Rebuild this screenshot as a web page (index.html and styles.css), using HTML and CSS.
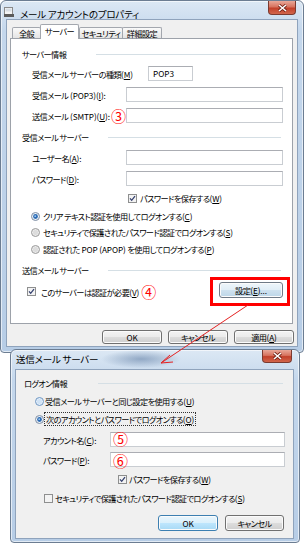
FILE: index.html
```html
<!DOCTYPE html>
<html lang="ja">
<head>
<meta charset="UTF-8">
<meta name="viewport" content="width=device-width, initial-scale=1.0">
<title>メール アカウントのプロパティ</title>
<link rel="stylesheet" href="styles.css">
</head>
<body>
<div class="page">

  <div class="window main">
    <div class="titlebar">
      <svg class="app-icon" width="10" height="10" viewBox="0 0 10 10">
        <rect x="0.5" y="0.5" width="8" height="7" fill="#f4f4f4" stroke="#8a8a8a"/>
        <rect x="1.5" y="1.5" width="6" height="3" fill="#d8dde4"/>
        <rect x="0" y="7" width="10" height="3" fill="#5b5b5b"/>
      </svg>
      <span class="title">メール アカウントのプロパティ</span>
      <span class="close">
        <svg width="9" height="8" viewBox="0 0 9 8"><path d="M1 1 L8 7 M8 1 L1 7" stroke="#6b1d12" stroke-width="3"/><path d="M1 1 L8 7 M8 1 L1 7" stroke="#fff" stroke-width="1.6"/></svg>
      </span>
    </div>
    <div class="client">
      <div class="tabs">
        <div class="tab">全般</div>
        <div class="tab active">サーバー</div>
        <div class="tab">セキュリティ</div>
        <div class="tab">詳細設定</div>
      </div>
      <div class="panel">
        <div class="group first"><span class="group-name short">サーバー情報</span><span class="rule"></span></div>

        <div class="field"><span class="label wide">受信メール サーバーの種類<span class="en">(<u>M</u>)</span></span><span class="box small">POP3</span></div>
        <div class="field"><span class="label">受信メール<span class="en"> (POP3)(<u>I</u>):</span></span><span class="box"></span></div>
        <div class="field"><span class="label">送信メール<span class="en"> (SMTP)(<u>U</u>):</span></span><span class="box"></span><span class="mark mark-smtp">③</span></div>

        <div class="group"><span class="group-name">受信メール サーバー</span><span class="rule"></span></div>

        <div class="field gap7"><span class="label">ユーザー名<span class="en">(<u>A</u>):</span></span><span class="box"></span></div>
        <div class="field"><span class="label">パスワード<span class="en">(<u>D</u>):</span></span><span class="box"></span></div>

        <div class="option save-pass">
          <svg class="cb" width="9" height="9" viewBox="0 0 9 9"><rect x="0.5" y="0.5" width="8" height="8" fill="#f3f3f3" stroke="#8e8f8f"/><path d="M2 4.3 L3.7 6.3 L7 2.2" fill="none" stroke="#34406e" stroke-width="1.3"/></svg>
          <span>パスワードを保存する<span class="en">(<u>W</u>)</span></span>
        </div>

        <div class="option radio r1">
          <svg class="rb" width="9" height="9" viewBox="0 0 9 9"><circle cx="4.5" cy="4.5" r="4" fill="#eef3f8" stroke="#7f8ea4"/><circle cx="4.5" cy="4.5" r="2.4" fill="#2c6bb4"/><circle cx="4.2" cy="4.2" r="0.9" fill="#9cc6ef"/></svg>
          <span>クリア テキスト認証を使用してログオンする<span class="en">(<u>C</u>)</span></span>
        </div>
        <div class="option radio r2">
          <svg class="rb" width="9" height="9" viewBox="0 0 9 9"><circle cx="4.5" cy="4.5" r="4" fill="#ececec" stroke="#9a9a9a"/><circle cx="4.5" cy="4.5" r="2.5" fill="#dcdcdc"/></svg>
          <span>セキュリティで保護されたパスワード認証でログオンする<span class="en">(<u>S</u>)</span></span>
        </div>
        <div class="option radio r3">
          <svg class="rb" width="9" height="9" viewBox="0 0 9 9"><circle cx="4.5" cy="4.5" r="4" fill="#ececec" stroke="#9a9a9a"/><circle cx="4.5" cy="4.5" r="2.5" fill="#dcdcdc"/></svg>
          <span>認証された<span class="en"> POP (APOP) </span>を使用してログオンする<span class="en">(<u>P</u>)</span></span>
        </div>

        <div class="group last"><span class="group-name">送信メール サーバー</span><span class="rule"></span></div>

        <div class="auth-row">
          <div class="option auth">
            <svg class="cb" width="9" height="9" viewBox="0 0 9 9"><rect x="0.5" y="0.5" width="8" height="8" fill="#f3f3f3" stroke="#8e8f8f"/><path d="M2 4.3 L3.7 6.3 L7 2.2" fill="none" stroke="#34406e" stroke-width="1.3"/></svg>
            <span>このサーバーは認証が必要<span class="en">(<u>V</u>)</span></span><span class="mark">④</span>
          </div>
          <div class="highlight">
            <span class="btn settings">設定<span class="en">(<u>E</u>)...</span></span>
          </div>
        </div>
      </div>
      <div class="buttons">
        <span class="btn en">OK</span>
        <span class="btn">キャンセル</span>
        <span class="btn">適用<span class="en">(<u>A</u>)</span></span>
      </div>
    </div>
  </div>

  <div class="window sub">
    <div class="titlebar">
      <span class="title">送信メール サーバー</span>
      <span class="close">
        <svg width="9" height="8" viewBox="0 0 9 8"><path d="M1 1 L8 7 M8 1 L1 7" stroke="#6b1d12" stroke-width="3"/><path d="M1 1 L8 7 M8 1 L1 7" stroke="#fff" stroke-width="1.6"/></svg>
      </span>
    </div>
    <div class="client">
      <div class="group"><span class="group-name short">ログオン情報</span><span class="rule"></span></div>

      <div class="option radio s1">
        <svg class="rb" width="9" height="9" viewBox="0 0 9 9"><circle cx="4.5" cy="4.5" r="4" fill="#e3eef9" stroke="#6f96c2"/><circle cx="4.5" cy="4.5" r="2.5" fill="#cfe2f5"/></svg>
        <span>受信メール サーバーと同じ設定を使用する<span class="en">(<u>U</u>)</span></span>
      </div>
      <div class="option radio s2">
        <svg class="rb" width="9" height="9" viewBox="0 0 9 9"><circle cx="4.5" cy="4.5" r="4" fill="#eef3f8" stroke="#7f8ea4"/><circle cx="4.5" cy="4.5" r="2.4" fill="#2c6bb4"/><circle cx="4.2" cy="4.2" r="0.9" fill="#9cc6ef"/></svg>
        <span class="focus">次のアカウントとパスワードでログオンする<span class="en">(<u>O</u>)</span></span>
      </div>

      <div class="field account"><span class="label">アカウント名<span class="en">(<u>C</u>):</span></span><span class="box"><span class="mark">⑤</span></span></div>
      <div class="field account pass"><span class="label">パスワード<span class="en">(<u>P</u>):</span></span><span class="box"><span class="mark">⑥</span></span></div>

      <div class="option save-pass2">
        <svg class="cb" width="9" height="9" viewBox="0 0 9 9"><rect x="0.5" y="0.5" width="8" height="8" fill="#f3f3f3" stroke="#8e8f8f"/><path d="M2 4.3 L3.7 6.3 L7 2.2" fill="none" stroke="#34406e" stroke-width="1.3"/></svg>
        <span>パスワードを保存する<span class="en">(<u>W</u>)</span></span>
      </div>
      <div class="option spa">
        <svg class="cb" width="9" height="9" viewBox="0 0 9 9"><rect x="0.5" y="0.5" width="8" height="8" fill="#f3f3f3" stroke="#8e8f8f"/></svg>
        <span>セキュリティで保護されたパスワード認証でログオンする<span class="en">(<u>S</u>)</span></span>
      </div>

      <div class="buttons sub-buttons">
        <span class="btn default en">OK</span>
        <span class="btn">キャンセル</span>
      </div>
    </div>
  </div>

  <svg class="arrow" width="305" height="546" viewBox="0 0 305 546">
    <path d="M248 305 L161 363" stroke="#e52222" stroke-width="1" fill="none"/>
    <path d="M170 355 L161 363 L173 362" stroke="#e52222" stroke-width="1" fill="none"/>
  </svg>
</div>
</body>
</html>
```

FILE: styles.css
```css
* {
    box-sizing: border-box;
}
body {
    margin: 0;
    background: #fff;
    font-family: "Noto Sans CJK JP", "Noto Sans", sans-serif;
    font-size: 8.2px;
    line-height: 12px;
    letter-spacing: -0.6px;
    color: #000;
    font-feature-settings: "palt" 1;
}
.en {
    letter-spacing: -0.1px;
}
u {
    text-underline-offset: 1px;
}
.page {
    position: relative;
    width: 305px;
    height: 546px;
    overflow: hidden;
}

/* window frame */
.window {
    display: flex;
    flex-direction: column;
    border: 1px solid #6c7d92;
    border-radius: 6px 6px 4px 4px;
    background: linear-gradient(180deg, #dce8f4 0, #c4d7ec 30px, #b7cde6 100%);
    box-shadow: inset 0 0 0 1px rgba(255, 255, 255, 0.6);
}
.main {
    width: 304px;
    height: 353px;
    padding: 0 5px 5px 5px;
}
.sub {
    position: relative;
    width: 290px;
    height: 194px;
    margin: -4px 0 0 10px;
    padding: 0 5px 3px 4px;
    background:
        radial-gradient(ellipse 40px 9px at 130px 9px, rgba(90, 120, 160, 0.55), rgba(90, 120, 160, 0) 100%),
        linear-gradient(180deg, #dce8f4 0, #c4d7ec 30px, #b7cde6 100%);
}
.titlebar {
    display: flex;
    align-items: flex-start;
    height: 18px;
    margin: 0 -5px;
    padding-left: 3px;
}
.sub .titlebar {
    height: 19px;
    margin: 0 -5px 0 -4px;
    padding-left: 5px;
}
.app-icon {
    margin-top: 6px;
    margin-right: 6px;
}
.title {
    margin-top: 7px;
    font-size: 9.5px;
    letter-spacing: -0.2px;
}
.sub .title {
    margin-top: 3px;
}
.close {
    display: flex;
    align-items: center;
    justify-content: center;
    width: 28px;
    height: 14px;
    margin-left: auto;
    margin-right: 7px;
    border: 1px solid #7b3a2f;
    border-top: none;
    border-radius: 0 0 4px 4px;
    background: linear-gradient(180deg, #e9a899 0, #d7735f 45%, #c2402a 55%, #d2664c 100%);
}
.sub .close {
    width: 30px;
    height: 13px;
}

/* client area */
.client {
    flex: 1;
    display: flex;
    flex-direction: column;
    background: #f0f0f0;
    border: 1px solid #8fa3bc;
}
.tabs {
    position: relative;
    z-index: 1;
    display: flex;
    align-items: flex-end;
    height: 19px;
    margin-bottom: -1px;
    padding-left: 5px;
}
.tab {
    height: 11px;
    margin-bottom: 1px;
    padding: 0;
    border: 1px solid #a3a7ae;
    border-bottom: none;
    border-radius: 2px 2px 0 0;
    background: linear-gradient(180deg, #fafafa, #e4e4e4);
    line-height: 10px;
    text-align: center;
    white-space: nowrap;
}
.tab:nth-child(1) { width: 29px; }
.tab:nth-child(3) { width: 44px; }
.tab:nth-child(4) { width: 40px; margin-left: -1px; }
.tab.active {
    position: relative;
    width: 39px;
    height: 15px;
    margin-left: -1px;
    margin-bottom: 0;
    background: #fff;
    line-height: 12px;
}

.panel {
    height: 286px;
    margin: 0 4px 0 3px;
    padding: 0 2px 0 11px;
    border: 1px solid #9da2aa;
    background: #fff;
}

/* group headers */
.group {
    display: flex;
    align-items: center;
    height: 12px;
    margin-top: 8px;
    margin-right: 9px;
}
.group.first,
.group.last {
    margin-top: 9px;
}
.group-name {
    width: 86px;
    flex: none;
    white-space: nowrap;
}
.group-name.short {
    width: 74px;
}
.rule {
    flex: 1;
    height: 1px;
    background: #d5dfe5;
}

/* label + text box rows */
.field {
    position: relative;
    display: flex;
    align-items: center;
    height: 15px;
    margin-top: 6px;
    margin-right: 7px;
    padding-left: 10px;
}
.field.gap7 {
    margin-top: 7px;
}
.label {
    width: 94px;
    flex: none;
    white-space: pre;
}
.label.wide {
    width: 116px;
}
.box {
    flex: 1;
    height: 15px;
    padding-left: 4px;
    border: 1px solid #c9cdd2;
    border-top-color: #abadb3;
    background: #fff;
    line-height: 13px;
}
.box.small {
    flex: none;
    width: 45px;
    letter-spacing: 0;
}

/* red annotations */
.mark {
    color: #f00;
    font-size: 15px;
    line-height: 15px;
    letter-spacing: 0;
    font-feature-settings: normal;
}
.mark-smtp {
    position: absolute;
    left: 89px;
    top: 0;
    width: 15px;
    height: 16px;
    background: #fff;
}
.highlight {
    width: 80px;
    height: 29px;
    padding: 2px 4px 5px 6px;
    border: 3px solid #f00;
}

/* check boxes and radios */
.option {
    display: flex;
    align-items: center;
    height: 12px;
    white-space: pre;
}
.option svg {
    flex: none;
    margin-right: 3px;
}
.save-pass {
    margin-top: 6px;
    padding-left: 106px;
}
.radio {
    padding-left: 9px;
}
.r1 { margin-top: 6px; }
.r2 { margin-top: 4px; }
.r3 { margin-top: 5px; }
.auth-row {
    display: flex;
    align-items: center;
    justify-content: space-between;
    height: 29px;
    margin-top: 1px;
}
.auth {
    padding-left: 5px;
}
.auth svg {
    margin-right: 5px;
}
.auth .mark {
    margin-left: 2px;
}

/* buttons */
.buttons {
    display: flex;
    justify-content: flex-end;
    gap: 6px;
    margin-top: 6px;
    padding-right: 3px;
}
.btn {
    display: flex;
    align-items: center;
    justify-content: center;
    width: 60px;
    height: 14px;
    border: 1px solid #707070;
    border-radius: 3px;
    background: linear-gradient(180deg, #f3f3f3 0, #ebebeb 50%, #dddddd 50%, #cfcfcf 100%);
    box-shadow: inset 0 0 0 1px #fbfbfb;
    white-space: nowrap;
}
.btn.settings {
    width: 64px;
    height: 16px;
    border-color: #6f7a86;
    background: linear-gradient(180deg, #eef6fb 0, #e1eef7 50%, #cfe2ef 50%, #bcd6e8 100%);
}
.btn.default {
    border-color: #3c7fb1;
    background: linear-gradient(180deg, #eaf6fd 0, #d9f0fc 50%, #bee6fd 50%, #a7d9f5 100%);
}

/* second dialog */
.sub .group {
    margin-top: 7px;
    margin-right: 10px;
    padding-left: 8px;
}
.sub .radio {
    padding-left: 19px;
}
.sub .radio svg {
    margin-right: 1px;
}
.s1 { margin-top: 6px; }
.s2 { margin-top: 6px; }
.focus {
    padding: 0 1px;
    outline: 1px dotted #333;
    outline-offset: 0;
}
.field.account {
    margin-top: 7px;
    margin-right: 8px;
    padding-left: 27px;
}
.field.account.pass {
    margin-top: 5px;
}
.account .label {
    width: 67px;
}
.account .box {
    padding-left: 2px;
}
.account .mark {
    display: inline-block;
    margin-top: -2px;
}
.pass .mark {
    margin-top: 0;
}
.save-pass2 {
    margin-top: 6px;
    padding-left: 102px;
}
.save-pass2 svg,
.spa svg {
    margin-right: 2px;
}
.spa {
    margin-top: 7px;
    padding-left: 28px;
}
.sub-buttons {
    gap: 7px;
    margin-top: 11px;
    padding-right: 9px;
}
.sub-buttons .btn {
    height: 16px;
}
.sub-buttons .btn + .btn {
    width: 59px;
}

.arrow {
    position: absolute;
    left: 0;
    top: 0;
    pointer-events: none;
}
```
